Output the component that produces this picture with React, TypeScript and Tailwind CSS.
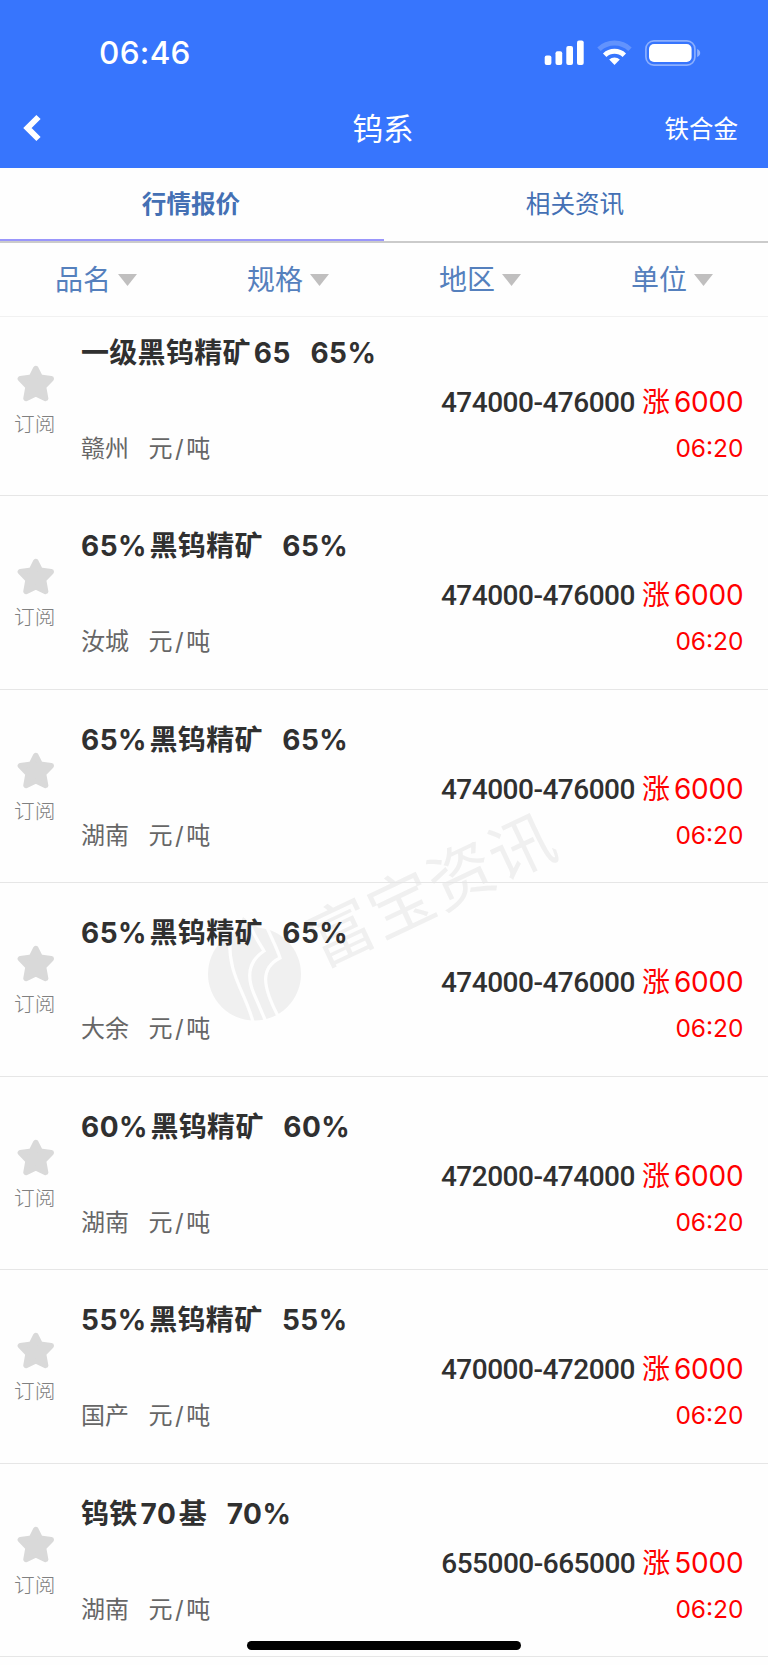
import { clsx } from 'clsx';

interface Quote {
    id: number;
    name: string;
    spec: string;
    area: string;
    price: string;
    change: string;
    time: string;
}

const quotes: Quote[] = [
    { id: 1, name: '一级黑钨精矿65', spec: '65%', area: '赣州', price: '474000-476000', change: '6000', time: '06:20' },
    { id: 2, name: '65%黑钨精矿', spec: '65%', area: '汝城', price: '474000-476000', change: '6000', time: '06:20' },
    { id: 3, name: '65%黑钨精矿', spec: '65%', area: '湖南', price: '474000-476000', change: '6000', time: '06:20' },
    { id: 4, name: '65%黑钨精矿', spec: '65%', area: '大余', price: '474000-476000', change: '6000', time: '06:20' },
    { id: 5, name: '60%黑钨精矿', spec: '60%', area: '湖南', price: '472000-474000', change: '6000', time: '06:20' },
    { id: 6, name: '55%黑钨精矿', spec: '55%', area: '国产', price: '470000-472000', change: '6000', time: '06:20' },
    { id: 7, name: '钨铁70基', spec: '70%', area: '湖南', price: '655000-665000', change: '5000', time: '06:20' },
];

const filters = ['品名', '规格', '地区', '单位'];

const StatusBar = () => (
    <div className="h-[88px] flex items-center justify-between pl-[99px] pr-[67px] pt-[17px]">
        <span className="text-[31.5px] leading-none font-medium tracking-[0.3px]">06:46</span>
        <div className="flex items-center">
            <svg width="40" height="26" viewBox="0 0 40 26" fill="currentColor">
                <rect x="0.7" y="15.5" width="6.7" height="9.5" rx="2" />
                <rect x="11.5" y="11.2" width="6.7" height="13.8" rx="2" />
                <rect x="22.3" y="6" width="6.7" height="19" rx="2" />
                <rect x="33" y="0.5" width="6.7" height="24.5" rx="2" />
            </svg>
            <svg className="ml-[13px]" width="35" height="26" viewBox="0 0 35 26" fill="none" stroke="currentColor">
                <path d="M2 9.2A22.5 22.5 0 0 1 33 9.2" strokeWidth="5" opacity="0.22" />
                <path d="M7.7 15.2A14.2 14.2 0 0 1 27.3 15.2" strokeWidth="5" />
                <path d="M17.5 25L12.2 19.6A7.6 7.6 0 0 1 22.8 19.6Z" fill="currentColor" stroke="none" />
            </svg>
            <svg className="ml-[13px]" width="56" height="26" viewBox="0 0 56 26" fill="none">
                <rect x="0.9" y="0.9" width="49" height="24.2" rx="8" stroke="white" strokeWidth="1.7" opacity="0.42" />
                <rect x="4" y="4" width="42.6" height="18" rx="5" fill="white" />
                <path d="M52.2 9v8c1.9-.8 3-2.3 3-4s-1.1-3.2-3-4Z" fill="white" opacity="0.45" />
            </svg>
        </div>
    </div>
);

const Caret = () => (
    <svg width="19" height="12" viewBox="0 0 19 12" fill="#c0bfbf">
        <path d="M0 0H19L9.5 12Z" />
    </svg>
);

const Star = () => (
    <svg width="38" height="37" viewBox="0 0 38 37" fill="#d9d9d9" stroke="#d9d9d9" strokeWidth="5.5" strokeLinejoin="round">
        <path d="M18.8 3.5L23.2 12.2L34.2 13.8L26.5 21.8L28.6 33.4L18.8 28.8L9 33.4L11.1 21.8L3.4 13.8L14.4 12.2Z" />
    </svg>
);

// Latin runs get a little air next to the Chinese characters
const MixedText = ({ text }: { text: string }) => {
    const parts = text.split(/([0-9%]+)/).filter(Boolean);
    return (
        <>
            {parts.map((part, i) => {
                const latin = /[0-9]/.test(part);
                return (
                    <span key={i} className={clsx(latin ? 'tracking-[0.5px]' : 'tracking-[0.3px]', i > 0 && (latin ? 'ml-[3px]' : 'ml-[2.5px]'))}>{part}</span>
                );
            })}
        </>
    );
};

const QuoteRow = ({ quote }: { quote: Quote }) => (
    <div className="h-[193.55px] flex border-b border-[#e6e6e6]">
        <div className="w-[81px] shrink-0 pt-[62px] pl-[17px] flex flex-col items-start">
            <Star />
            <span className="mt-[11px] -ml-[3px] text-[20.7px] leading-[24px] font-light text-[#808080]">订阅</span>
        </div>
        <div className="flex-1 pt-[34px] flex flex-col">
            <div className="text-[28px] leading-[32px] font-bold text-[#303030] whitespace-nowrap">
                <MixedText text={quote.name} />
                <span className="ml-[19.5px] tracking-[0.5px]">{quote.spec}</span>
            </div>
            <div className="mt-[65px] flex text-[24px] leading-[30px] text-[#666]">
                <span>{quote.area}</span>
                <span className="ml-[19.5px]">元</span>
                <span className="ml-[2.5px]">/</span>
                <span className="ml-[2.5px]">吨</span>
            </div>
        </div>
        <div className="pr-[24.5px] pt-[83px] flex flex-col items-end">
            <div className="flex items-baseline text-[28px] leading-[32px] text-[#f00]">
                <span className="font-['Roboto'] font-medium tracking-[-0.5px] text-[#303030]">{quote.price}</span>
                <span className="ml-[7px]">涨</span>
                <span className="ml-[4px] tracking-[-0.2px]">{quote.change}</span>
            </div>
            <span className="mt-[15px] text-[24.5px] leading-[28px] text-[#f00]">{quote.time}</span>
        </div>
    </div>
);

const Watermark = () => (
    <div className="absolute inset-0 pointer-events-none text-[#f0f0f0]">
        <svg className="absolute left-[206px] top-[914px]" width="98" height="110" viewBox="0 0 98 110">
            <circle cx="48.5" cy="60" r="46.5" fill="currentColor" />
            <path d="M37 3L30 20L58 18Z" fill="currentColor" />
            <g fill="none" stroke="#fefefe" strokeWidth="3.2">
                <path d="M24 20C21 62 39 76 47 108" />
                <path d="M41 3C46 19 52 27 58 37C40 49 42 66 48 80L60 108" />
                <path d="M59 8C63 20 70 31 74 44C54 54 56 72 73 104" />
            </g>
        </svg>
        <span className="absolute left-[298px] top-[850px] w-[268px] text-center text-[65px] leading-[80px] tracking-[1.5px] -rotate-[25.3deg] whitespace-nowrap">富宝资讯</span>
    </div>
);

export default function App() {
    return (
        <div className="relative w-[768px] h-[1665px] overflow-hidden bg-[#fefefe] font-['Inter','Noto_Sans_CJK_SC',sans-serif]">
            <Watermark />

            {/* Header */}
            <header className="relative h-[167.5px] bg-[#3775fd] text-white">
                <StatusBar />
                <div className="h-[80px] grid grid-cols-3 items-center">
                    <svg className="ml-[22px]" width="19" height="28" viewBox="0 0 19 28" fill="none" stroke="currentColor" strokeWidth="6">
                        <path d="M16.5 3L5.5 14L16.5 25" />
                    </svg>
                    <h1 className="pt-[2px] pr-[2px] text-center text-[30.5px] leading-[40px]">钨系</h1>
                    <span className="pt-px pr-[30px] text-right text-[24.5px] leading-[30px]">铁合金</span>
                </div>
            </header>

            {/* Tabs */}
            <nav className="relative h-[75px] grid grid-cols-2 text-center text-[24.6px] text-[#4470b4] border-b-2 border-[#cbcbcb]">
                <button className="pt-[3px] pr-[2px] font-bold border-b-2 border-[#9a96fb]">行情报价</button>
                <button className="pt-[3px] pr-[2px] border-b-2 border-transparent">相关资讯</button>
            </nav>

            {/* Filters */}
            <div className="relative h-[74.5px] grid grid-cols-4 text-[28px] text-[#5580bd] border-b border-[#f1f1f1]">
                {filters.map(label => (
                    <button key={label} className="pt-[2px] flex items-center justify-center gap-[7px]">
                        {label}
                        <Caret />
                    </button>
                ))}
            </div>

            {/* Quotes */}
            <main className="relative -mt-[14.5px]">
                {quotes.map(q => <QuoteRow key={q.id} quote={q} />)}
            </main>

            {/* Home indicator */}
            <div className="absolute left-[247px] bottom-[15px] w-[274px] h-[9px] rounded-full bg-black" />
        </div>
    );
}
